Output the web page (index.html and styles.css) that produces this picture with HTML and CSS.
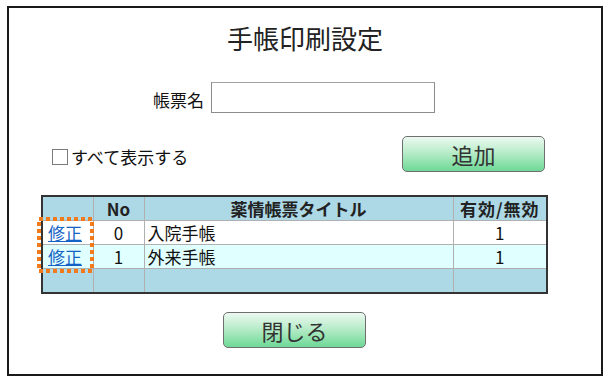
FILE: index.html
```html
<!DOCTYPE html>
<html lang="ja">
<head>
<meta charset="UTF-8">
<title>手帳印刷設定</title>
<link rel="stylesheet" href="styles.css">
</head>
<body>

<div class="frame">
  <h1 class="title">手帳印刷設定</h1>

  <div class="name-row">
    <label class="name-label" for="form-name">帳票名</label>
    <input class="name-input" id="form-name" type="text">
  </div>

  <div class="option-row">
    <label class="show-all">
      <input class="check" type="checkbox">
      <span>すべて表示する</span>
    </label>
    <button class="btn">追加</button>
  </div>

  <div class="table-wrap">
    <table class="list">
      <colgroup>
        <col class="c-edit">
        <col class="c-no">
        <col class="c-title">
        <col class="c-flag">
      </colgroup>
      <tr class="head">
        <th></th>
        <th>No</th>
        <th>薬情帳票タイトル</th>
        <th>有効/無効</th>
      </tr>
      <tr class="odd">
        <td><a href="#">修正</a></td>
        <td class="center">0</td>
        <td>入院手帳</td>
        <td class="center">1</td>
      </tr>
      <tr class="even">
        <td><a href="#">修正</a></td>
        <td class="center">1</td>
        <td>外来手帳</td>
        <td class="center">1</td>
      </tr>
      <tr class="foot">
        <td></td>
        <td></td>
        <td></td>
        <td></td>
      </tr>
    </table>
    <!-- highlight around the edit links -->
    <svg class="mark" width="57" height="56" viewBox="0 0 57 56">
      <rect x="2" y="2" width="53" height="52" fill="none" stroke="#f27a1a" stroke-width="4" stroke-dasharray="4 3"/>
    </svg>
  </div>

  <div class="close-row">
    <button class="btn">閉じる</button>
  </div>
</div>

</body>
</html>
```

FILE: styles.css
```css
/* page */
body {
  margin: 0;
  background: #fff;
  font-family: "Noto Sans CJK JP", "Liberation Sans", sans-serif;
  color: #111;
}
.frame {
  box-sizing: border-box;
  width: 596px;
  height: 370px;
  margin: 6px 0 0 7px;
  border: 2px solid #1a1a1a;
}
.title {
  margin: 15px 0 0 0;
  font-size: 26px;
  line-height: 30px;
  font-weight: normal;
  text-align: center;
  color: #222;
}
.name-row {
  display: flex;
  align-items: center;
  margin-top: 29px;
  padding-left: 144px;
}
.name-label {
  font-size: 17px;
  margin-right: 7px;
  padding-top: 4px;
}
.name-input {
  box-sizing: border-box;
  width: 224px;
  height: 31px;
  margin: 0;
  border: 1px solid #8c8c8c;
  border-top-color: #a0a0a0;
}
.option-row {
  display: flex;
  align-items: center;
  justify-content: space-between;
  margin-top: 23px;
  padding: 0 56px 0 43px;
}
.show-all {
  display: flex;
  align-items: center;
  font-size: 17px;
  padding-top: 5px;
}
.check {
  appearance: none;
  box-sizing: border-box;
  width: 16px;
  height: 16px;
  margin: 0 3px 0 0;
  border: 1.5px solid #7a7a7a;
  background: #fff;
}
.btn {
  box-sizing: border-box;
  width: 143px;
  height: 36px;
  padding: 0;
  border: 1px solid #6f6f6f;
  border-radius: 5px;
  background: linear-gradient(#ecf9f0 0%, #b9ecca 45%, #8fe2ad 75%, #6fd797 100%);
  font-family: "Noto Sans CJK JP", sans-serif;
  font-size: 22px;
  line-height: 30px;
  color: #333;
}
.table-wrap {
  position: relative;
  width: 507px;
  margin: 23px 0 0 32px;
}
.list {
  width: 507px;
  border-collapse: collapse;
  border: 2px solid #333;
  font-size: 17px;
  table-layout: fixed;
}
.c-edit { width: 51px; }
.c-no { width: 51px; }
.c-flag { width: 94px; }
.list th,
.list td {
  border: 1px solid #b0b0b0;
  padding: 0 3px;
  height: 23px;
  line-height: 23px;
  white-space: nowrap;
  overflow: visible;
}
.list th {
  font-weight: bold;
  text-align: center;
  color: #222;
}
.list .head th:nth-child(4) {
  letter-spacing: 1px;
  padding: 0;
}
.head,
.foot {
  background: #add8e6;
}
.odd {
  background: #fff;
}
.even {
  background: #e0ffff;
}
.center {
  text-align: center;
}
.list a {
  color: #1462c6;
  text-decoration: underline;
  padding-left: 2px;
}
.mark {
  position: absolute;
  left: -4px;
  top: 22px;
}
.close-row {
  margin: 18px 0 0 214px;
}
```
